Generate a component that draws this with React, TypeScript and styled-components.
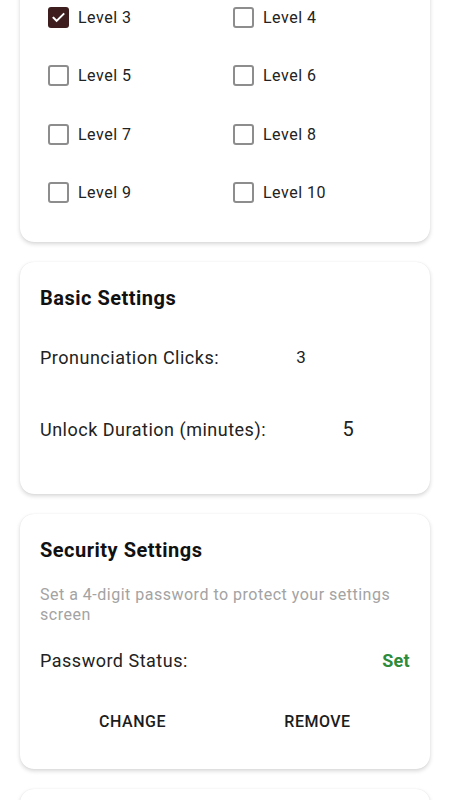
import React from 'react';
import styled, {createGlobalStyle} from 'styled-components';

const GlobalStyle = createGlobalStyle`
    html, body {
        margin: 0;
        padding: 0;
        background: #ffffff;
        font-family: Roboto, "Noto Sans", sans-serif;
        color: #1c1c1c;
        overflow: hidden;
    }
`;

const Page = styled.div`
    display: flex;
    flex-direction: column;
    gap: 20px;
    padding: 0 20px 40px;
    margin-top: -32px;
`;

const Card = styled.section<{$minHeight?: number}>`
    background: #ffffff;
    border-radius: 14px;
    box-shadow: 0 2px 4px rgba(0, 0, 0, 0.16), 0 0 1px rgba(0, 0, 0, 0.1);
    padding: 20px;
    min-height: ${({$minHeight}) => ($minHeight ? `${$minHeight}px` : 'auto')};
`;

const LevelGrid = styled.div`
    display: grid;
    grid-template-columns: 1fr 1fr;
    grid-auto-rows: 58.5px;
`;

const LevelItem = styled.label`
    display: flex;
    align-items: center;
    gap: 9px;
    padding-left: 8px;
    font-size: 16px;
    letter-spacing: 0.5px;
    color: #222;
`;

const Box = styled.span<{$checked: boolean}>`
    width: 21px;
    height: 21px;
    box-sizing: border-box;
    border-radius: 3px;
    border: ${({$checked}) => ($checked ? 'none' : '2px solid #8d8d8d')};
    background: ${({$checked}) => ($checked ? '#3d1d1e' : 'transparent')};
    display: flex;
    align-items: center;
    justify-content: center;
`;

const Title = styled.h2`
    margin: 0;
    font-size: 20px;
    line-height: 32px;
    font-weight: 700;
    letter-spacing: 0.5px;
    color: #111;
`;

const FieldList = styled.div`
    display: flex;
    flex-direction: column;
    gap: 24px;
    margin-top: 19px;
    margin-bottom: 21px;
`;

const FieldRow = styled.div`
    display: flex;
    align-items: center;
    height: 48px;
`;

const FieldLabel = styled.span`
    flex-shrink: 0;
    white-space: nowrap;
    font-size: 18px;
    letter-spacing: 0.5px;
    color: #222;
`;

const FieldValue = styled.span<{$size: number}>`
    flex-shrink: 0;
    width: 124px;
    margin-left: 20px;
    text-align: center;
    font-size: ${({$size}) => $size}px;
    color: #222;
`;

const Description = styled.p`
    margin: 19px 0 0;
    font-size: 16px;
    line-height: 20px;
    letter-spacing: 0.5px;
    color: #a3a3a3;
`;

const StatusRow = styled.div`
    display: flex;
    justify-content: space-between;
    align-items: center;
    height: 24px;
    margin-top: 23px;
`;

const StatusValue = styled.span`
    font-size: 18px;
    font-weight: 700;
    letter-spacing: 0.3px;
    color: #2e8b3a;
`;

const ButtonRow = styled.div`
    display: flex;
    margin-top: 25px;
    margin-bottom: 4px;
`;

const TextButton = styled.button`
    flex: 1;
    height: 48px;
    border: none;
    background: transparent;
    font-family: Roboto, "Noto Sans", sans-serif;
    font-size: 16px;
    font-weight: 500;
    letter-spacing: 0.5px;
    text-transform: uppercase;
    color: #1c1c1c;
`;

const levels = [3, 4, 5, 6, 7, 8, 9, 10];

function CheckBox({checked}: {checked: boolean}) {
	return (
		<Box $checked={checked}>
			{checked && (
				<svg width="15" height="15" viewBox="0 0 24 24">
					<path d="M4 12.5l5 5L20 6.5" fill="none" stroke="#fff" strokeWidth="3.2" strokeLinecap="square" />
				</svg>
			)}
		</Box>
	);
}

export default function App() {
	return (
		<>
			<GlobalStyle />
			<Page>
				<Card>
					<LevelGrid>
						{levels.map(level => (
							<LevelItem key={level}>
								<CheckBox checked={level === 3} />
								Level {level}
							</LevelItem>
						))}
					</LevelGrid>
				</Card>
				<Card>
					<Title>Basic Settings</Title>
					<FieldList>
						<FieldRow>
							<FieldLabel>Pronunciation Clicks:</FieldLabel>
							<FieldValue $size={17}>3</FieldValue>
						</FieldRow>
						<FieldRow>
							<FieldLabel>Unlock Duration (minutes):</FieldLabel>
							<FieldValue $size={20}>5</FieldValue>
						</FieldRow>
					</FieldList>
				</Card>
				<Card>
					<Title>Security Settings</Title>
					<Description>Set a 4-digit password to protect your settings screen</Description>
					<StatusRow>
						<FieldLabel>Password Status:</FieldLabel>
						<StatusValue>Set</StatusValue>
					</StatusRow>
					<ButtonRow>
						<TextButton>Change</TextButton>
						<TextButton>Remove</TextButton>
					</ButtonRow>
				</Card>
				<Card $minHeight={120} />
			</Page>
		</>
	);
}
